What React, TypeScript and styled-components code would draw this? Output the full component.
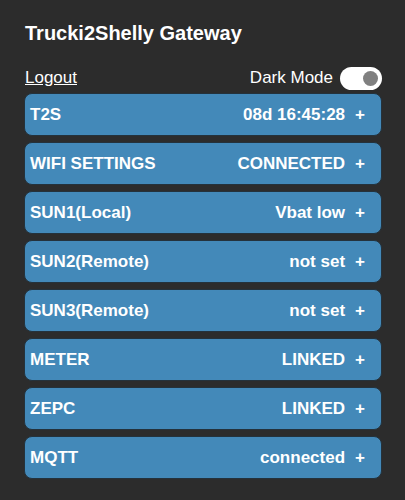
import React from "react";
import styled, { createGlobalStyle } from "styled-components";

const GlobalStyle = createGlobalStyle`
  html, body {
    margin: 0;
    padding: 0;
    background-color: #2c2c2c;
  }
  body {
    font-family: "Liberation Sans", Arial, sans-serif;
    color: #ffffff;
  }
`;

const Page = styled.div`
  padding: 22px 23px 0 24px;
  height: 500px;
  box-sizing: border-box;
`;

const Title = styled.h1`
  margin: 0 0 0 1px;
  font-size: 20px;
  font-weight: bold;
  line-height: 23px;
`;

const TopBar = styled.div`
  display: flex;
  justify-content: space-between;
  align-items: center;
  margin-top: 20px;
  height: 26px;
  margin-bottom: 2px;
`;

const LogoutLink = styled.a`
  color: #ffffff;
  font-size: 17px;
  text-decoration: underline;
  margin-left: 1px;
  cursor: pointer;
`;

const ModeBox = styled.label`
  display: flex;
  align-items: center;
  gap: 7px;
  font-size: 17px;
`;

const Switch = styled.span<{ $on: boolean }>`
  position: relative;
  display: inline-block;
  width: 42px;
  height: 23px;
  border-radius: 12px;
  background: #ffffff;

  &::after {
    content: "";
    position: absolute;
    top: 4px;
    left: ${(p) => (p.$on ? "23px" : "4px")};
    width: 15px;
    height: 15px;
    border-radius: 50%;
    background: #808080;
  }
`;

const List = styled.div`
  display: flex;
  flex-direction: column;
  gap: 6px;
`;

const Row = styled.div`
  display: flex;
  align-items: center;
  height: 43px;
  box-sizing: border-box;
  padding: 0 16px 0 5px;
  border-radius: 8px;
  background: #4389b9;
  border: 1px solid #24323c;
  font-size: 17px;
  font-weight: bold;
  cursor: pointer;
`;

const Label = styled.span`
  flex: 1;
`;

const Status = styled.span``;

const Plus = styled.span`
  margin-left: 10px;
`;

const rows = [
  ["T2S", "08d 16:45:28"],
  ["WIFI SETTINGS", "CONNECTED"],
  ["SUN1(Local)", "Vbat low"],
  ["SUN2(Remote)", "not set"],
  ["SUN3(Remote)", "not set"],
  ["METER", "LINKED"],
  ["ZEPC", "LINKED"],
  ["MQTT", "connected"],
];

export default function App() {
  return (
    <>
      <GlobalStyle />
      <Page>
        <Title>Trucki2Shelly Gateway</Title>
        <TopBar>
          <LogoutLink>Logout</LogoutLink>
          <ModeBox>
            Dark Mode
            <Switch $on />
          </ModeBox>
        </TopBar>
        <List>
          {rows.map(([label, status]) => (
            <Row key={label}>
              <Label>{label}</Label>
              <Status>{status}</Status>
              <Plus>+</Plus>
            </Row>
          ))}
        </List>
      </Page>
    </>
  );
}
